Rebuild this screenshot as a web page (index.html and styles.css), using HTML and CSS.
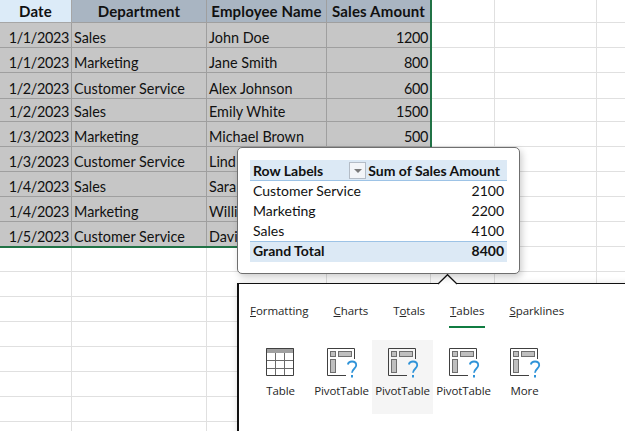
FILE: index.html
```html
<!DOCTYPE html>
<html lang="en">
<head>
<meta charset="utf-8">
<title>Quick Analysis - Tables</title>
<link rel="stylesheet" href="styles.css">
</head>
<body>
<svg class="defs" width="0" height="0" aria-hidden="true">
  <symbol id="pivot" viewBox="0 0 32 32">
    <path class="frame" d="M19 27.5H.5V.5H27.5V11"/>
    <rect class="block" x="3.5" y="3.5" width="5" height="5"/>
    <rect class="block" x="11.5" y="3.5" width="13" height="5"/>
    <rect class="block" x="3.5" y="11.5" width="5" height="13"/>
    <path class="mark" d="M20.8 16.5c.5-2 2.4-3 4.2-3 2.6 0 4.2 1.5 4.2 3.7 0 3.5-4.2 3.6-4.2 7.6"/>
    <rect class="dot" x="24" y="27" width="2" height="2.5"/>
  </symbol>
</svg>

<div class="sheet">
  <div class="row row-short head">
    <div class="cell date-head">Date</div><div class="cell sel-head">Department</div><div class="cell sel-head">Employee Name</div><div class="cell sel-head">Sales Amount</div><div class="cell"></div><div class="cell"></div><div class="cell"></div>
  </div>
  <div class="row">
    <div class="cell sel num">1/1/2023</div><div class="cell sel">Sales</div><div class="cell sel">John Doe</div><div class="cell sel num">1200</div><div class="cell"></div><div class="cell"></div><div class="cell"></div>
  </div>
  <div class="row">
    <div class="cell sel num">1/1/2023</div><div class="cell sel">Marketing</div><div class="cell sel">Jane Smith</div><div class="cell sel num">800</div><div class="cell"></div><div class="cell"></div><div class="cell"></div>
  </div>
  <div class="row row-tall">
    <div class="cell sel num">1/2/2023</div><div class="cell sel">Customer Service</div><div class="cell sel">Alex Johnson</div><div class="cell sel num">600</div><div class="cell"></div><div class="cell"></div><div class="cell"></div>
  </div>
  <div class="row row-short">
    <div class="cell sel num">1/2/2023</div><div class="cell sel">Sales</div><div class="cell sel">Emily White</div><div class="cell sel num">1500</div><div class="cell"></div><div class="cell"></div><div class="cell"></div>
  </div>
  <div class="row">
    <div class="cell sel num">1/3/2023</div><div class="cell sel">Marketing</div><div class="cell sel">Michael Brown</div><div class="cell sel num">500</div><div class="cell"></div><div class="cell"></div><div class="cell"></div>
  </div>
  <div class="row">
    <div class="cell sel num">1/3/2023</div><div class="cell sel">Customer Service</div><div class="cell sel">Lind</div><div class="cell sel num"></div><div class="cell"></div><div class="cell"></div><div class="cell"></div>
  </div>
  <div class="row">
    <div class="cell sel num">1/4/2023</div><div class="cell sel">Sales</div><div class="cell sel">Sara</div><div class="cell sel num"></div><div class="cell"></div><div class="cell"></div><div class="cell"></div>
  </div>
  <div class="row">
    <div class="cell sel num">1/4/2023</div><div class="cell sel">Marketing</div><div class="cell sel">Willi</div><div class="cell sel num"></div><div class="cell"></div><div class="cell"></div><div class="cell"></div>
  </div>
  <div class="row">
    <div class="cell sel num">1/5/2023</div><div class="cell sel">Customer Service</div><div class="cell sel">Davi</div><div class="cell sel num"></div><div class="cell"></div><div class="cell"></div><div class="cell"></div>
  </div>
  <div class="row"><div class="cell"></div><div class="cell"></div><div class="cell"></div><div class="cell"></div><div class="cell"></div><div class="cell"></div><div class="cell"></div></div>
  <div class="row"><div class="cell"></div><div class="cell"></div><div class="cell"></div><div class="cell"></div><div class="cell"></div><div class="cell"></div><div class="cell"></div></div>
  <div class="row"><div class="cell"></div><div class="cell"></div><div class="cell"></div><div class="cell"></div><div class="cell"></div><div class="cell"></div><div class="cell"></div></div>
  <div class="row"><div class="cell"></div><div class="cell"></div><div class="cell"></div><div class="cell"></div><div class="cell"></div><div class="cell"></div><div class="cell"></div></div>
  <div class="row"><div class="cell"></div><div class="cell"></div><div class="cell"></div><div class="cell"></div><div class="cell"></div><div class="cell"></div><div class="cell"></div></div>
  <div class="row"><div class="cell"></div><div class="cell"></div><div class="cell"></div><div class="cell"></div><div class="cell"></div><div class="cell"></div><div class="cell"></div></div>
  <div class="row"><div class="cell"></div><div class="cell"></div><div class="cell"></div><div class="cell"></div><div class="cell"></div><div class="cell"></div><div class="cell"></div></div>
  <div class="row"><div class="cell"></div><div class="cell"></div><div class="cell"></div><div class="cell"></div><div class="cell"></div><div class="cell"></div><div class="cell"></div></div>
  <div class="selection"></div>

  <div class="gallery">
    <svg class="notch" width="20" height="11" viewBox="0 0 20 11" aria-hidden="true"><path d="M0 10 L9.5 .7 L19 10" /></svg>
    <div class="tabs">
      <span class="tab"><u>F</u>ormatting</span>
      <span class="tab"><u>C</u>harts</span>
      <span class="tab">T<u>o</u>tals</span>
      <span class="tab tab-active"><u>T</u>ables</span>
      <span class="tab"><u>S</u>parklines</span>
    </div>
    <div class="tools">
      <div class="tool">
        <svg class="tool-icon" viewBox="0 0 32 32" aria-hidden="true">
          <rect class="table-head" x="0" y="0" width="28" height="5"/>
          <path class="frame" d="M.5 .5H27.5V27.5H.5Z"/>
          <path class="table-lines" d="M9.5 5V27M18.5 5V27M1 12.5H27M1 20.5H27"/>
        </svg>
        <span>Table</span>
      </div>
      <div class="tool"><svg class="tool-icon" aria-hidden="true"><use href="#pivot"/></svg><span>PivotTable</span></div>
      <div class="tool tool-hover"><svg class="tool-icon" aria-hidden="true"><use href="#pivot"/></svg><span>PivotTable</span></div>
      <div class="tool"><svg class="tool-icon" aria-hidden="true"><use href="#pivot"/></svg><span>PivotTable</span></div>
      <div class="tool"><svg class="tool-icon" aria-hidden="true"><use href="#pivot"/></svg><span>More</span></div>
    </div>
  </div>

  <div class="preview">
    <div class="pv-row pv-head"><span class="pv-label">Row Labels<span class="filter"></span></span><span>Sum of Sales Amount</span></div>
    <div class="pv-row"><span>Customer Service</span><span>2100</span></div>
    <div class="pv-row"><span>Marketing</span><span>2200</span></div>
    <div class="pv-row"><span>Sales</span><span>4100</span></div>
    <div class="pv-row pv-total"><span>Grand Total</span><span>8400</span></div>
  </div>
</div>
</body>
</html>
```

FILE: styles.css
```css
* { box-sizing: border-box; }
html, body { margin: 0; padding: 0; }
body { width: 625px; height: 431px; overflow: hidden; background: #fff; font-family: "Lato", "Liberation Sans", sans-serif; color: #111; }
.defs { position: absolute; }

.sheet { position: relative; width: 625px; height: 431px; overflow: hidden; font-size: 14.4px; }

.row { display: flex; height: 25px; }
.row-short { height: 23px; }
.row-tall { height: 26px; }

.cell { display: flex; align-items: flex-end; padding: 0 2px; white-space: nowrap; overflow: hidden; border-right: 1px solid #e0e0e0; border-bottom: 1px solid #e0e0e0; line-height: 18px; }
.cell:nth-child(1) { flex: 0 0 72px; }
.cell:nth-child(2) { flex: 0 0 135px; }
.cell:nth-child(3) { flex: 0 0 120px; }
.cell:nth-child(4) { flex: 0 0 104px; }
.cell:nth-child(5) { flex: 0 0 64px; }
.cell:nth-child(6) { flex: 0 0 102px; }
.cell:nth-child(7) { flex: 1; border-right: 0; }

.sel { background: #c6c6c6; border-color: #9f9f9f; }
.num { justify-content: flex-end; letter-spacing: -.35px; }
.head .cell { padding-bottom: 2px; font-size: 15px; font-weight: 700; letter-spacing: .15px; justify-content: center; }
.date-head { background: #dcebf8; border-color: #a6a6a6; }
.sel-head { background: #a9b5c2; border-color: #9f9f9f; }

.selection { position: absolute; left: 0; top: 0; width: 432px; height: 248px; border-right: 2px solid #217346; border-bottom: 2px solid #217346; pointer-events: none; }

/* pivot preview tooltip */
.preview { position: absolute; left: 237px; top: 147px; width: 283px; height: 127px; padding: 12px 12px 0 12px; background: #fff; border: 1px solid #6f6f6f; border-radius: 5px; box-shadow: 2px 3px 7px rgba(0, 0, 0, .2); font-size: 14px; }
.pv-row { display: flex; justify-content: space-between; height: 20px; padding: 0 3px; line-height: 19px; }
.pv-head, .pv-total { background: #dce9f5; font-weight: 700; }
.pv-head { height: 21px; padding-right: 7px; border-bottom: 1px solid #9dc3e6; line-height: 21px; }
.pv-total { height: 21px; border-top: 1px solid #9dc3e6; line-height: 18px; }
.pv-label { display: flex; width: 113px; justify-content: space-between; align-items: center; }
.filter { position: relative; width: 17px; height: 17px; background: #f3f5f8; border: 1px solid #b4bcc6; }
.filter::after { content: ""; position: absolute; left: 4px; top: 6px; border-left: 4px solid transparent; border-right: 4px solid transparent; border-top: 4px solid #7a7a7a; }

/* quick analysis gallery */
.gallery { position: absolute; left: 237px; top: 283px; width: 400px; height: 160px; background: #fff; border-top: 1px solid #111; border-left: 2px solid #111; box-shadow: 0 0 6px rgba(0, 0, 0, .12); font-family: "Open Sans", "Noto Sans", sans-serif; font-size: 11.5px; color: #262626; }
.notch { position: absolute; left: 199px; top: -10px; overflow: visible; }
.notch path { fill: #fff; stroke: #111; stroke-width: 1.2; }

.tabs { display: flex; gap: 25px; padding: 18px 0 0 11px; height: 46px; line-height: 17px; }
.tab { position: relative; height: 26px; letter-spacing: -.05px; }
.tab-active::after { content: ""; position: absolute; left: -1px; right: -1px; top: 24px; height: 2px; background: #107c41; }

.tools { display: flex; padding: 10px 0 0 11px; }
.tool { display: flex; flex-direction: column; align-items: center; flex: 0 0 61px; height: 74px; padding-top: 8px; white-space: nowrap; letter-spacing: -.1px; }
.tool span { margin-top: 2px; line-height: 17px; }
.tool-hover { background: #f5f5f5; }
.tool-icon { display: block; flex: none; width: 32px; height: 32px; margin-left: 3px; }
.frame { fill: none; stroke: #404040; stroke-width: 1; }
.block { fill: #bfbfbf; stroke: #6e6e6e; stroke-width: 1; }
.mark { fill: none; stroke: #2f93d8; stroke-width: 1.8; }
.dot { fill: #2f93d8; }
.table-head { fill: #a0a0a0; }
.table-lines { fill: none; stroke: #6a6a6a; stroke-width: 1; }
```
